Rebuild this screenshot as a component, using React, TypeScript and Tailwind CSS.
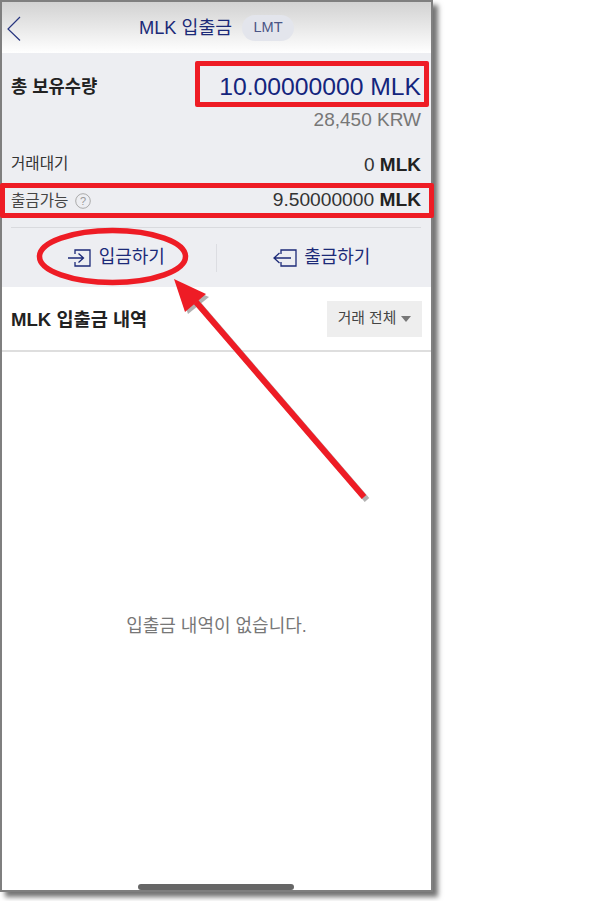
import React from "react";

const font = "[font-family:'Liberation_Sans','Noto_Sans_CJK_KR',sans-serif]";

export default function App() {
  return (
    <div className={`relative w-[603px] h-[901px] bg-white ${font}`}>
      <div className="flex flex-col w-[433px] h-[892px] border-2 border-[#7f7f7f] bg-white shadow-[5px_5px_5px_rgba(0,0,0,0.55)]">
        <header className="flex items-center justify-center relative h-[51px] shrink-0 bg-gradient-to-b from-[#d2d2d2] to-white">
          <svg className="absolute left-[4px] top-[14px]" width="16" height="26" viewBox="0 0 16 26" fill="none">
            <path d="M14 1 L2 13 L14 24.5" stroke="#27357f" strokeWidth="1.2" />
          </svg>
          <span className="text-[18.3px] leading-none text-[#1c2a78] translate-y-[1px]">MLK 입출금</span>
          <span className="ml-[10px] flex items-center justify-center w-[52px] h-[26px] rounded-full bg-[#e3e5ec] text-[14.6px] text-[#4a5585]">LMT</span>
        </header>

        <section className="flex flex-col h-[234px] shrink-0 bg-[#edeef2] pl-[9px] pr-[10px]">
          <div className="flex items-center justify-between h-[68px] shrink-0">
            <span className="text-[17.7px] font-bold text-[#222]">총 보유수량</span>
            <span className="text-[24.7px] leading-none text-[#14257d]">10.00000000 MLK</span>
          </div>
          <div className="text-right text-[19px] leading-none text-[#777] -mt-[11px]">28,450 KRW</div>
          <div className="flex items-center justify-between h-[24px] mt-[23px] shrink-0">
            <span className="text-[15.6px] text-[#333]">거래대기</span>
            <span className="text-[19px] text-[#333] translate-y-[1px]">0 <b className="text-[#222]">MLK</b></span>
          </div>
          <div className="flex items-center justify-between h-[24px] mt-[13px] shrink-0">
            <span className="flex items-center text-[15.6px] text-[#444]">
              출금가능
              <svg className="ml-[7px]" width="16" height="16" viewBox="0 0 16 16" fill="none">
                <circle cx="8" cy="8" r="7.3" stroke="#aaa" strokeWidth="1" />
                <text x="8" y="12" textAnchor="middle" fontSize="11" fill="#999">?</text>
              </svg>
            </span>
            <span className="text-[19.2px] text-[#333] -translate-y-[1px]">9.50000000 <b className="text-[#222]">MLK</b></span>
          </div>
          <div className="flex flex-1 mt-[14px] border-t border-[#d9dade] items-center">
            <button className="flex flex-1 items-center justify-center gap-[8px] pl-[6px] text-[18px] text-[#1c2a78] h-[28px] border-r border-[#dcdde2]">
              <svg width="23" height="18" viewBox="0 0 23 18" fill="none" stroke="#1c2a78" strokeWidth="1.3">
                <path d="M7 5 V1 H22 V17 H7 V13" />
                <path d="M0 9 H15 M10.5 4.5 L15.5 9 L10.5 13.5" />
              </svg>
              입금하기
            </button>
            <button className="flex flex-1 items-center justify-center gap-[7px] pl-[6px] text-[18px] text-[#1c2a78] h-[28px]">
              <svg width="24" height="18" viewBox="0 0 24 18" fill="none" stroke="#1c2a78" strokeWidth="1.3">
                <path d="M8 5 V1 H23 V17 H8 V13" />
                <path d="M18 9 H1.5 M6.5 4 L1 9 L6.5 14" />
              </svg>
              출금하기
            </button>
          </div>
        </section>

        <section className="flex items-center justify-between h-[65px] shrink-0 pl-[9px] pr-[9px] border-b-2 border-[#dedede]">
          <span className="text-[18.6px] font-bold text-[#222] translate-y-[1px]">MLK 입출금 내역</span>
          <div className="flex items-center justify-center gap-[5px] w-[95px] h-[36px] bg-[#eeeeee] text-[14.8px] text-[#444]">
            거래 전체
            <svg width="10" height="6" viewBox="0 0 10 6"><path d="M0 0 H10 L5 6 Z" fill="#777" /></svg>
          </div>
        </section>

        <main className="flex flex-1 flex-col items-center relative">
          <p className="mt-[260px] text-[18px] leading-[28px] text-[#777]">입출금 내역이 없습니다.</p>
          <div className="absolute bottom-[0px] left-[136px] w-[156px] h-[6px] rounded-full bg-[#666]" />
        </main>
      </div>

      <div className="absolute left-[195px] top-[61px] w-[234px] h-[46px] border-[5px] border-[#ee1c25] rounded-[2px]" />
      <div className="absolute left-[0px] top-[183px] w-[434px] h-[35px] border-[5px] border-[#ee1c25] rounded-[2px]" />

      <svg className="absolute left-0 top-0 pointer-events-none" width="603" height="901" viewBox="0 0 603 901" fill="none">
        <ellipse cx="112.5" cy="256.5" rx="73" ry="26" stroke="#ee1c25" strokeWidth="5.5" />
        <g transform="translate(3 3)" opacity="0.45">
          <path d="M196 302 L364 497" stroke="#555" strokeWidth="6" />
          <path d="M174 280 L185 311 L206 294 Z" fill="#555" />
        </g>
        <path d="M196 302 L364 497" stroke="#ee1c25" strokeWidth="6" />
        <path d="M174 279 L185 312 L206 294 Z" fill="#ee1c25" />
      </svg>
    </div>
  );
}
